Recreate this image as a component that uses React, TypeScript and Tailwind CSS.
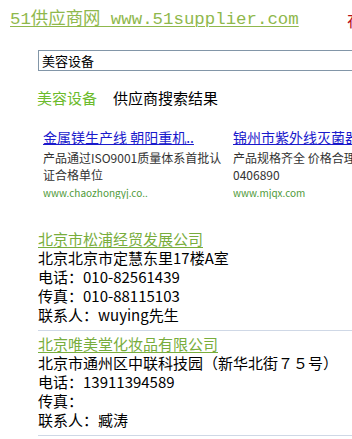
const ads = [
  {
    title: "金属镁生产线 朝阳重机..",
    desc: "产品通过ISO9001质量体系首批认证合格单位",
    url: "www.chaozhongyj.co..",
  },
  {
    title: "锦州市紫外线灭菌器厂家直销",
    desc: "产品规格齐全  价格合理 电话0406890",
    url: "www.mjqx.com",
  },
];

const suppliers = [
  {
    name: "北京市松浦经贸发展公司",
    address: "北京北京市定慧东里17楼A室",
    phone: "010-82561439",
    fax: "010-88115103",
    contact: "wuying先生",
  },
  {
    name: "北京唯美堂化妆品有限公司",
    address: "北京市通州区中联科技园（新华北街７５号）",
    phone: "13911394589",
    fax: "",
    contact: "臧涛",
  },
];

export default function App() {
  return (
    <div className="h-[439px] w-[352px] overflow-hidden bg-white font-['Noto_Sans_CJK_SC',sans-serif] text-black">
      <header className="flex w-[600px] pl-[10px] pt-[9px]">
        <a className="w-[337px] shrink-0 text-[17.4px] leading-[21px] text-[#8fb84c] underline decoration-1 underline-offset-[2px] font-['Liberation_Mono','Noto_Sans_CJK_SC',monospace]">
          51供应商网 www.51supplier.com
        </a>
        <span className="text-[17px] leading-[21px] text-[#b8121c]">在线客服</span>
      </header>

      <div className="ml-[38px] mt-[20px] flex h-[21px] w-[340px] items-center border border-[#8296a8] px-[3px] text-[13px]">
        美容设备
      </div>

      <div className="ml-[37px] mt-[18px] flex gap-[16px] text-[15px] leading-[18px]">
        <span className="text-[#6cbb2c]">美容设备</span>
        <span>供应商搜索结果</span>
      </div>

      <div className="ml-[43px] mt-[22px] grid w-[400px] grid-cols-[190px_190px] text-[12px]">
        {ads.map((ad) => (
          <div key={ad.url} className="overflow-hidden">
            <a className="block whitespace-nowrap text-[14px] leading-[17px] text-[#1a1acc] underline decoration-1">
              {ad.title}
            </a>
            <p className="mt-[3px] pr-[4px] leading-[17px] text-[#333]">{ad.desc}</p>
            <p className="mt-[3px] text-[10px] leading-[13px] text-[#4f9a3a]">{ad.url}</p>
          </div>
        ))}
      </div>

      <div className="ml-[38px] mt-[27px] w-[400px]">
        {suppliers.map((s) => (
          <div key={s.name} className="border-b border-[#cfd8e6] pb-[6px] pt-[3px] text-[15px] leading-[19px]">
            <a className="block w-fit text-[#78ad3c] underline decoration-1 underline-offset-[2px]">{s.name}</a>
            <p>{s.address}</p>
            <p>电话：{s.phone}</p>
            <p>传真：{s.fax}</p>
            <p>联系人：{s.contact}</p>
          </div>
        ))}
      </div>
    </div>
  );
}
